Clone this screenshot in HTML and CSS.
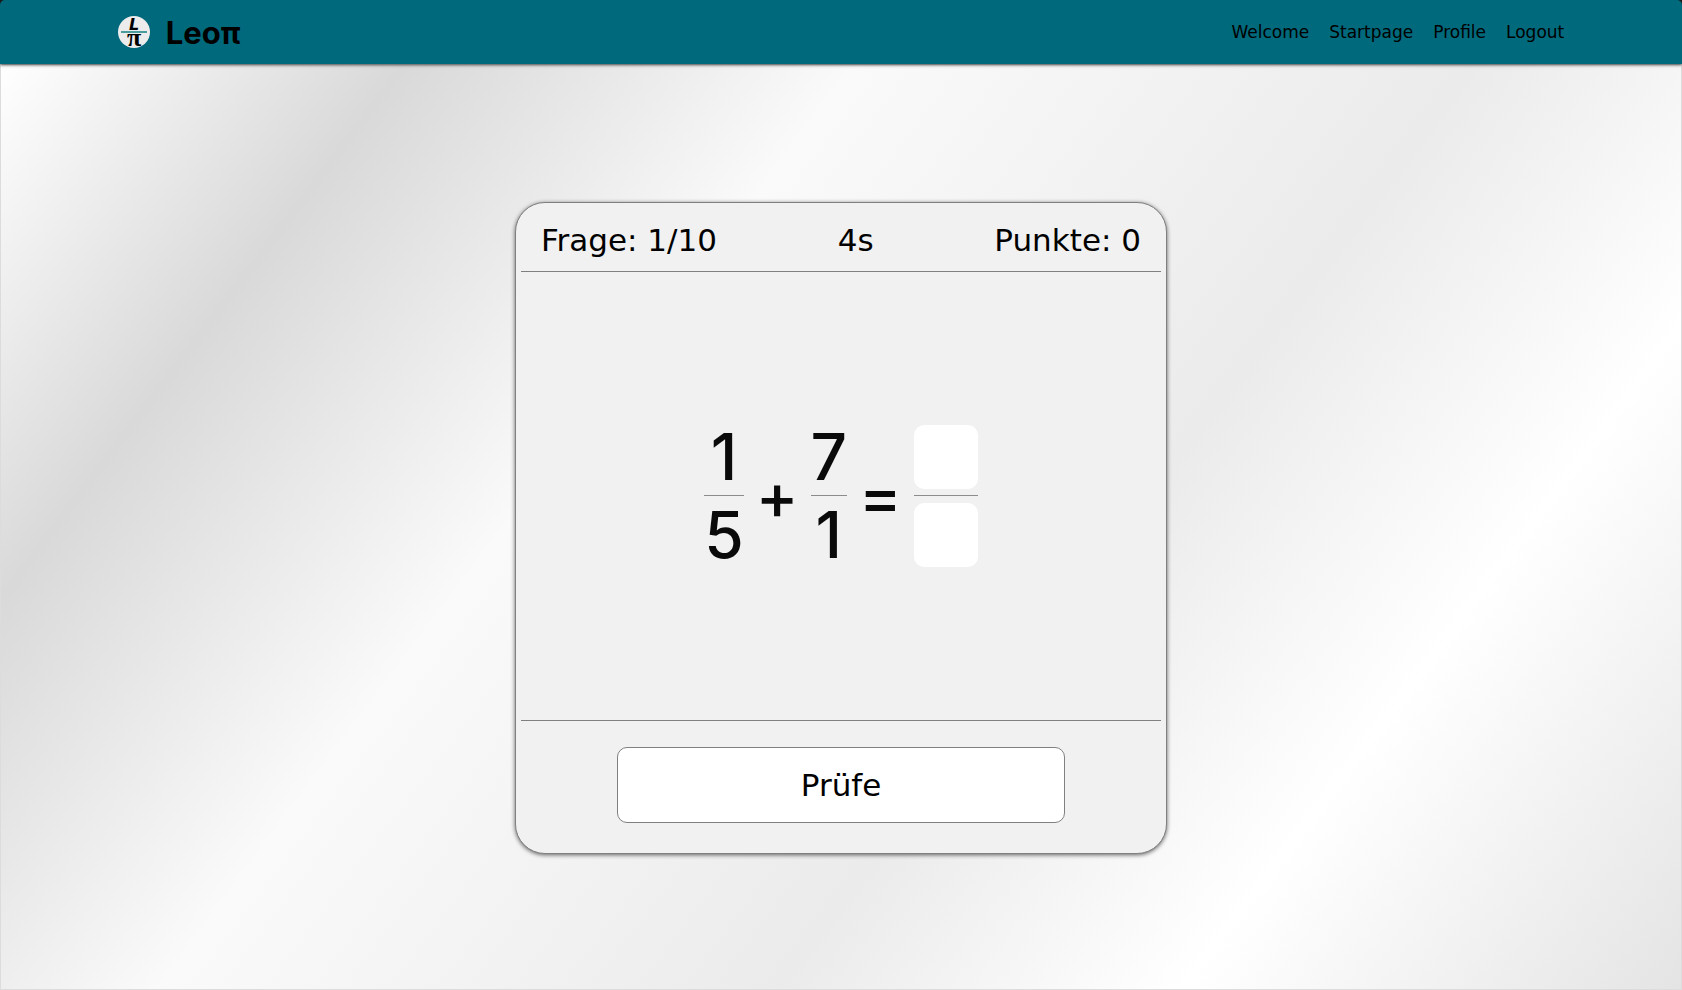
FILE: index.html
```html
<!DOCTYPE html>
<html lang="de">
  <head>
    <meta charset="UTF-8" />
    <meta name="viewport" content="width=device-width, initial-scale=1.0" />
    <title>Leoπ</title>
    <link rel="stylesheet" href="styles.css">
  </head>
  <body>
    <header class="navbar">
      <a class="brand" href="#">
        <svg class="logo" viewBox="0 0 32 32" aria-hidden="true">
          <circle cx="16" cy="16" r="16" fill="#ececec" />
          <text class="logo-l" x="16" y="14" text-anchor="middle">L</text>
          <text class="logo-pi" x="16" y="30" text-anchor="middle">π</text>
          <rect x="3" y="15" width="26" height="2" fill="#4a9c9c" />
        </svg>
        <span>Leoπ</span>
      </a>
      <nav class="links">
        <a href="#">Welcome</a>
        <a href="#">Startpage</a>
        <a href="#">Profile</a>
        <a href="#">Logout</a>
      </nav>
    </header>
    <main>
      <form class="card">
        <div class="status">
          <span>Frage: 1/10</span>
          <span>4s</span>
          <span>Punkte: 0</span>
        </div>
        <div class="task">
          <div class="fraction">
            <span>1</span>
            <hr />
            <span>5</span>
          </div>
          <span>+</span>
          <div class="fraction">
            <span>7</span>
            <hr />
            <span>1</span>
          </div>
          <span>=</span>
          <div class="fraction">
            <input type="text" aria-label="Zähler" />
            <hr />
            <input type="text" aria-label="Nenner" />
          </div>
        </div>
        <div class="actions">
          <button type="button">Prüfe</button>
        </div>
      </form>
    </main>
  </body>
</html>
```

FILE: styles.css
```css
* {
  box-sizing: border-box;
}

html {
  background: #1b1b1b;
}

body {
  margin: 0;
  min-height: 100vh;
  display: flex;
  flex-direction: column;
  font-family: "DejaVu Sans", sans-serif;
  color: #000;
  border-radius: 5px 5px 0 0;
  overflow: hidden;
}

.navbar {
  height: 64px;
  padding: 0 7%;
  display: flex;
  align-items: center;
  justify-content: space-between;
  background: #00697c;
  box-shadow: 0 1px 3px rgba(0, 0, 0, 0.7);
  z-index: 1;
}

.navbar a {
  color: inherit;
  text-decoration: none;
}

.brand {
  display: flex;
  align-items: center;
  gap: 16px;
  font-family: Inter, sans-serif;
  font-size: 31px;
  font-weight: 700;
}

.logo {
  width: 32px;
  height: 32px;
  overflow: visible;
}

.logo-l {
  font: italic bold 16px "DejaVu Sans", sans-serif;
}

.logo-pi {
  font: bold 26px "Liberation Serif", serif;
}

.links {
  display: flex;
  gap: 20px;
  font-size: 17px;
}

main {
  flex: 1;
  display: flex;
  align-items: center;
  justify-content: center;
  padding-top: 2px;
  background: linear-gradient(127deg, #fff, #d9d9d9 17%, #fafafa 36%, #ebebeb 62%, #fff 79%, #e4e4e4);
  box-shadow: inset 0 0 0 1px #dcdcdc;
}

.card {
  width: 652px;
  max-width: 100%;
  min-height: 652px;
  padding: 5px;
  display: flex;
  flex-direction: column;
  background: #f1f1f1;
  border: 1px solid gray;
  border-radius: 30px;
  box-shadow: 0 1px 4px rgba(0, 0, 0, 0.6);
}

.status {
  height: 64px;
  padding: 0 20px;
  display: flex;
  align-items: center;
  justify-content: space-between;
  border-bottom: 1px solid gray;
  font-size: 31px;
}

.task {
  flex: 1;
  display: flex;
  align-items: center;
  justify-content: center;
  gap: 12px;
  font-family: Inter, sans-serif;
  font-size: 64px;
  font-weight: 500;
  line-height: 64px;
  color: #0a0a0a;
}

.fraction {
  display: flex;
  flex-direction: column;
  text-align: center;
}

.fraction hr {
  width: 100%;
  height: 1px;
  margin: 6px 0 7px;
  border: 0;
  background: #8c8c8c;
}

.fraction input {
  width: 64px;
  height: 64px;
  border: 0;
  border-radius: 10px;
  background: #fff;
  font: inherit;
  text-align: center;
}

.actions {
  height: 128px;
  display: flex;
  align-items: center;
  justify-content: center;
  border-top: 1px solid gray;
}

.actions button {
  width: 70%;
  height: 76px;
  border: 1px solid gray;
  border-radius: 10px;
  background: #fff;
  color: inherit;
  font-family: inherit;
  font-size: 31px;
  cursor: pointer;
}
```
